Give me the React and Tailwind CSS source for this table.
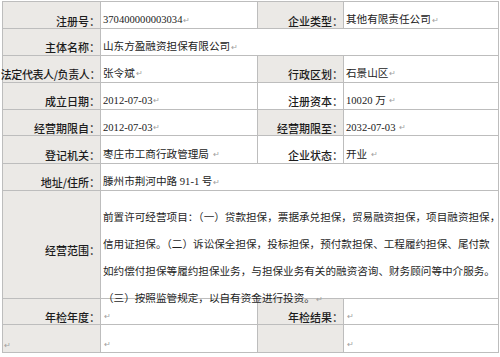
import React from "react";

const cjk = { fontFamily: "'Noto Sans CJK SC', sans-serif" };

// petite marque de paragraphe façon Word
const Mark = () => (
  <span className="ml-[1px] text-[8px] text-[#a0a0a0] align-middle">↵</span>
);

const Label = ({ children, gray = true, tight = false }) => (
  <td
    className={`border border-[#bdbdbd] p-0 pt-[11px] align-middle ${
      gray ? "bg-[#ebe9e6]" : "bg-white"
    }`}
  >
    <div
      className={`flex justify-end whitespace-nowrap text-[11px] font-medium leading-[14px] text-[#1c1c1c] ${
        tight ? "tracking-[-0.4px]" : ""
      }`}
    >
      {children}
    </div>
  </td>
);

const Value = ({ children, colSpan }) => (
  <td
    colSpan={colSpan}
    className="border border-[#bdbdbd] bg-white p-0 pl-[2px] pt-[11px] align-middle"
  >
    <div
      className="overflow-hidden whitespace-nowrap text-[10.6px] leading-[14px] text-[#222]"
      style={{ fontFamily: "'Liberation Serif', 'Noto Sans CJK SC', serif" }}
    >
      {children}
    </div>
  </td>
);

const rows = [
  { h: "h-[27px]", l: "注册号：", v: "370400000003034", l2: "企业类型：", v2: "其他有限责任公司", g2: true },
  { h: "h-[26px]", l: "主体名称：", v: "山东方盈融资担保有限公司", span: true },
  { h: "h-[27px]", l: "法定代表人/负责人：", v: "张令斌", l2: "行政区划：", v2: "石景山区", g2: true, tight: true },
  { h: "h-[27px]", l: "成立日期：", v: "2012-07-03", l2: "注册资本：", v2: "10020 万 ", g2: false },
  { h: "h-[26px]", l: "经营期限自：", v: "2012-07-03", l2: "经营期限至：", v2: "2032-07-03 ", g2: true },
  { h: "h-[28px]", l: "登记机关：", v: "枣庄市工商行政管理局 ", l2: "企业状态：", v2: "开业 ", g2: false },
  { h: "h-[26px]", l: "地址/住所：", v: "滕州市荆河中路 91-1 号", span: true },
];

const scope = [
  "前置许可经营项目：（一）贷款担保，票据承兑担保，贸易融资担保，项目融资担保，",
  "信用证担保。（二）诉讼保全担保，投标担保，预付款担保、工程履约担保、尾付款",
  "如约偿付担保等履约担保业务，与担保业务有关的融资咨询、财务顾问等中介服务。",
  "（三）按照监管规定，以自有资金进行投资。",
];

export default function App() {
  return (
    <div className="h-[357px] w-[500px] overflow-hidden bg-white pl-[2px] pt-[1px]" style={cjk}>
      <table className="w-[496px] table-fixed border-collapse">
        <colgroup>
          <col className="w-[98px]" />
          <col className="w-[157px]" />
          <col className="w-[86px]" />
          <col className="w-[155px]" />
        </colgroup>
        <tbody>
          {rows.map((r, i) => (
            <tr key={i} className={r.h}>
              <Label tight={r.tight}>{r.l}</Label>
              {r.span ? (
                <Value colSpan={3}>
                  {r.v}
                  <Mark />
                </Value>
              ) : (
                <>
                  <Value>
                    {r.v}
                    <Mark />
                  </Value>
                  <Label gray={r.g2}>{r.l2}</Label>
                  <Value>
                    {r.v2}
                    <Mark />
                  </Value>
                </>
              )}
            </tr>
          ))}

          {/* 经营范围 */}
          <tr className="h-[108px]">
            <Label>经营范围：</Label>
            <td colSpan={3} className="border border-[#bdbdbd] bg-white p-0 pl-[2px] align-top">
              <div className="h-[106px] overflow-x-clip whitespace-nowrap pt-[12px] text-[10.6px] text-[#1e1e1e]">
                <div className="h-[27px] leading-[27px]">{scope[0]}</div>
                <div className="h-[27px] leading-[27px]">{scope[1]}</div>
                <div className="h-[27px] leading-[27px]">{scope[2]}</div>
                <div className="h-[13px] leading-[27px]">
                  {scope[3]}
                  <Mark />
                </div>
              </div>
            </td>
          </tr>

          <tr className="h-[25px]">
            <Label>年检年度：</Label>
            <Value>
              <Mark />
            </Value>
            <Label>年检结果：</Label>
            <Value>
              <Mark />
            </Value>
          </tr>
          <tr className="h-[28px]">
            <td className="border border-[#bdbdbd] bg-[#ebe9e6] p-0 pt-[11px] align-middle">
              <div className="text-[11px] leading-[14px]">
                <Mark />
              </div>
            </td>
            <Value>
              <Mark />
            </Value>
            <Label> </Label>
            <Value>
              <Mark />
            </Value>
          </tr>
        </tbody>
      </table>
    </div>
  );
}
